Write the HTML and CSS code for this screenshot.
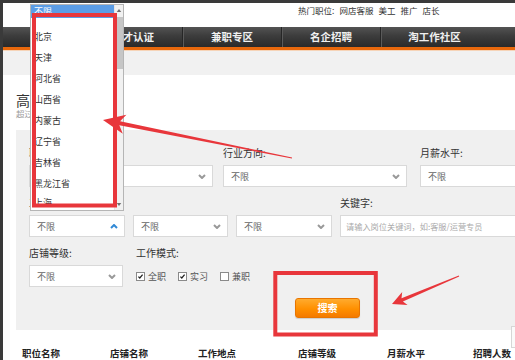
FILE: index.html
```html
<!DOCTYPE html>
<html lang="zh">
<head>
<meta charset="utf-8">
<link rel="stylesheet" href="styles.css">
</head>
<body>
<div class="page">
  <div class="topbar">
    <span>热门职位:</span><span>网店客服</span><span>美工</span><span>推广</span><span>店长</span>
  </div>
  <nav class="nav">
    <a class="nav-item first">首页</a>
    <a class="nav-item">人才认证</a>
    <a class="nav-item">兼职专区</a>
    <a class="nav-item">名企招聘</a>
    <a class="nav-item last">淘工作社区</a>
  </nav>
  <div class="band"></div>
  <main class="content">
    <h1 class="title">高级搜索</h1>
    <p class="sub">超过万个职位任你选择</p>
    <section class="panel">
      <div class="row">
        <div class="field w184">
          <div class="label">职位类别:</div>
          <div class="select"><span>不限</span><svg class="chev" viewBox="0 0 8 5"><path d="M1 1L4 4L7 1"/></svg></div>
        </div>
        <div class="field w184 g10">
          <div class="label">行业方向:</div>
          <div class="select"><span>不限</span><svg class="chev" viewBox="0 0 8 5"><path d="M1 1L4 4L7 1"/></svg></div>
        </div>
        <div class="field w184 g13">
          <div class="label">月薪水平:</div>
          <div class="select"><span>不限</span><svg class="chev" viewBox="0 0 8 5"><path d="M1 1L4 4L7 1"/></svg></div>
        </div>
      </div>
      <div class="row">
        <div class="field w96">
          <div class="label">工作地点:</div>
          <div class="select"><span>不限</span><svg class="chev up" viewBox="0 0 8 5"><path d="M1 4L4 1L7 4"/></svg></div>
        </div>
        <div class="field w95 g8">
          <div class="label"></div>
          <div class="select"><span>不限</span><svg class="chev" viewBox="0 0 8 5"><path d="M1 1L4 4L7 1"/></svg></div>
        </div>
        <div class="field w96 g8">
          <div class="label"></div>
          <div class="select"><span>不限</span><svg class="chev" viewBox="0 0 8 5"><path d="M1 1L4 4L7 1"/></svg></div>
        </div>
        <div class="field w200 g8">
          <div class="label">关键字:</div>
          <div class="select input"><span>请输入岗位关键词，如:客服/运营专员</span></div>
        </div>
      </div>
      <div class="row">
        <div class="field w94">
          <div class="label">店铺等级:</div>
          <div class="select"><span>不限</span><svg class="chev" viewBox="0 0 8 5"><path d="M1 1L4 4L7 1"/></svg></div>
        </div>
        <div class="field g13">
          <div class="label">工作模式:</div>
          <div class="checks">
            <span class="check"><span class="box on"><svg viewBox="0 0 9 9"><path d="M1.8 4.6L3.6 6.4L7.2 2.2"/></svg></span>全职</span>
            <span class="check"><span class="box on"><svg viewBox="0 0 9 9"><path d="M1.8 4.6L3.6 6.4L7.2 2.2"/></svg></span>实习</span>
            <span class="check"><span class="box"></span>兼职</span>
          </div>
        </div>
      </div>
      <button class="search">搜索</button>
    </section>
    <div class="thead">
      <span>职位名称</span><span>店铺名称</span><span>工作地点</span><span>店铺等级</span><span>月薪水平</span><span>招聘人数</span>
    </div>
  </main>
</div>

<div class="dropdown">
  <div class="list">
    <div class="opt sel">不限</div>
    <div class="opts">
      <div class="opt">北京</div>
      <div class="opt">天津</div>
      <div class="opt">河北省</div>
      <div class="opt">山西省</div>
      <div class="opt">内蒙古</div>
      <div class="opt">辽宁省</div>
      <div class="opt">吉林省</div>
      <div class="opt">黑龙江省</div>
      <div class="opt last">上海</div>
    </div>
  </div>
  <div class="scrollbar">
    <svg class="arrow" viewBox="0 0 8 6"><path d="M1 5L4 1L7 5Z"/></svg>
    <div class="thumb"></div>
    <div class="spacer"></div>
    <svg class="arrow" viewBox="0 0 8 6"><path d="M1 1L4 5L7 1Z"/></svg>
  </div>
</div>

<div class="side"></div>

<svg class="annot" viewBox="0 0 515 360" width="515" height="360">
  <rect x="34" y="15" width="81" height="190.5" fill="none" stroke="#e8363b" stroke-width="4"/>
  <rect x="275.3" y="273" width="100.5" height="61.5" fill="none" stroke="#e8363b" stroke-width="4"/>
  <polygon fill="#e8363b" points="103,120 126.4,114.8 120.1,121.3 292.1,157.5 291.9,158.5 119.3,125.3 122.8,133.8"/>
  <polygon fill="#e8363b" points="392,304 402.2,292.1 401.5,298.2 458.8,275.5 459.2,276.5 402.9,301.4 407.6,305.1"/>
</svg>
</body>
</html>
```

FILE: styles.css
```css
* { box-sizing: border-box; margin: 0; padding: 0; }
html, body { width: 515px; height: 360px; overflow: hidden; background: #fff; }
body {
  position: relative;
  font-family: "Noto Sans CJK SC", "Noto Sans", sans-serif;
  color: #333;
}
.page {
  width: 515px;
  height: 360px;
  overflow: hidden;
  border-left: 3px solid #3a3a3a;
  border-top: 3px solid #3a3a3a;
}
.topbar {
  height: 24px;
  padding-left: 295px;
  display: flex;
  gap: 5px;
  font-size: 8.5px;
  line-height: 14px;
  color: #333;
  white-space: nowrap;
}
.nav {
  display: flex;
  height: 23px;
  background: linear-gradient(#535353, #3c3c3c 45%, #2a2a2a);
  border-bottom: 3px solid #e8680c;
}
.nav-item {
  flex: 0 0 99px;
  text-align: center;
  font-size: 10.5px;
  font-weight: bold;
  line-height: 20px;
  color: #f0f0f0;
  border-left: 1px solid #262626;
  box-shadow: inset 1px 0 0 #5a5a5a;
}
.nav-item.first { flex-basis: 80px; border-left: none; box-shadow: none; }
.nav-item.last { flex-basis: 108px; }
.band {
  height: 25px;
  background: #f1f1f1;
  border-top: 1px solid #f6d4b8;
}
.content { padding-left: 13px; }
.title {
  margin-top: 17px;
  font-size: 14px;
  line-height: 16px;
  font-weight: normal;
  color: #333;
  white-space: nowrap;
}
.sub {
  font-size: 8.5px;
  line-height: 10px;
  color: #999;
  white-space: nowrap;
}
.panel {
  margin-top: 12px;
  width: 620px;
  background: #f0f0f0;
  padding: 16px 0 12px 13px;
  display: flex;
  flex-direction: column;
  gap: 9px;
}
.row { display: flex; }
.field { display: flex; flex-direction: column; gap: 5px; flex: none; }
.w184 { width: 184px; }
.w96 { width: 96px; }
.w95 { width: 95px; }
.w94 { width: 94px; }
.w200 { width: 200px; }
.g8 { margin-left: 8px; }
.g10 { margin-left: 10px; }
.g13 { margin-left: 13px; }
.label {
  height: 14px;
  font-size: 10px;
  line-height: 14px;
  color: #333;
  white-space: nowrap;
}
.select {
  height: 22px;
  background: #fff;
  border: 1px solid #d9d9d9;
  padding: 0 6px 0 7px;
  display: flex;
  align-items: center;
  justify-content: space-between;
  font-size: 9px;
  color: #666;
  white-space: nowrap;
}
.select.input { color: #aaa; font-size: 8.2px; padding-left: 5px; }
.chev { width: 8px; height: 5px; fill: none; stroke: #999; stroke-width: 2; }
.chev.up { stroke: #3189d6; }
.checks {
  height: 22px;
  display: flex;
  align-items: center;
  gap: 12px;
}
.check {
  display: inline-flex;
  align-items: center;
  gap: 3px;
  font-size: 9px;
  color: #555;
  white-space: nowrap;
}
.box {
  width: 9px;
  height: 9px;
  border: 1px solid #8a8a8a;
  background: #fff;
  display: inline-flex;
}
.box svg { width: 7px; height: 7px; fill: none; stroke: #222; stroke-width: 1.6; }
.search {
  margin: 2px 0 0 266px;
  width: 65px;
  height: 20px;
  border: 1px solid #e87500;
  border-radius: 3px;
  background: linear-gradient(#ffab2e, #ff9000 55%, #f47a00);
  color: #fff;
  font-family: inherit;
  font-size: 10px;
  font-weight: bold;
  line-height: 18px;
  box-shadow: 0 1px 1px rgba(0,0,0,0.15);
}
.thead {
  margin-top: 16px;
  padding-left: 6px;
  display: grid;
  grid-template-columns: 88px 88px 100px 89px 86px 100px;
  font-size: 9.5px;
  font-weight: bold;
  line-height: 14px;
  color: #222;
  white-space: nowrap;
}
.dropdown {
  position: absolute;
  left: 30px;
  top: 4px;
  width: 94px;
  height: 207px;
  background: #fff;
  border: 1px solid #b5b5b5;
  display: flex;
  overflow: hidden;
}
.list { flex: 1; overflow: hidden; }
.opt {
  height: 21px;
  padding-left: 3px;
  font-size: 9px;
  line-height: 21px;
  color: #333;
  white-space: nowrap;
}
.opt.last { height: 14px; line-height: 17px; }
.opt.sel {
  height: 13px;
  line-height: 13px;
  background: #5b9de6;
  color: #fff;
}
.opts { padding-top: 8px; }
.scrollbar {
  width: 9px;
  background: #f1f1f1;
  border-left: 1px solid #e6e6e6;
  display: flex;
  flex-direction: column;
  align-items: center;
}
.arrow { width: 6px; height: 5px; margin: 3px 0; fill: #707070; flex: none; }
.thumb { width: 7px; height: 52px; background: #c6c6c6; margin-top: 1px; flex: none; }
.spacer { flex: 1; }
.side {
  position: absolute;
  left: 511px;
  top: 326px;
  width: 20px;
  height: 22px;
  background: #fafafa;
  border: 1px solid #d6d6d6;
}
.annot {
  position: absolute;
  left: 0;
  top: 0;
  pointer-events: none;
}
```
